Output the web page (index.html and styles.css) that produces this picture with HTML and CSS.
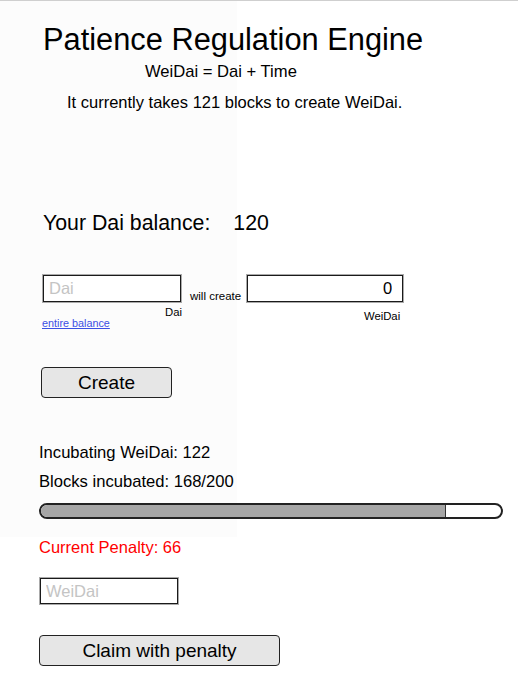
FILE: index.html
```html
<!DOCTYPE html>
<html>
<head>
<meta charset="utf-8">
<link rel="stylesheet" href="styles.css">
</head>
<body>
<div class="shade"></div>
<main class="page">
  <header class="head">
    <h1 class="title">Patience Regulation Engine</h1>
    <p class="formula">WeiDai = Dai + Time</p>
    <p class="blocks">It currently takes 121 blocks to create WeiDai.</p>
  </header>

  <section class="balance">
    <span>Your Dai balance:</span><span class="bal-val">120</span>
  </section>

  <section class="convert">
    <div class="field">
      <input class="box" type="text" placeholder="Dai">
      <span class="unit">Dai</span>
      <a class="entire" href="#">entire balance</a>
    </div>
    <span class="will">will create</span>
    <div class="field">
      <input class="box right" type="text" value="0">
      <span class="unit unit2">WeiDai</span>
    </div>
  </section>

  <button class="btn create">Create</button>

  <section class="incubation">
    <p class="line">Incubating WeiDai: 122</p>
    <p class="line">Blocks incubated: 168/200</p>
    <div class="bar"><div class="fill" style="width:88%"></div></div>
    <p class="penalty">Current Penalty: 66</p>
    <input class="box small" type="text" placeholder="WeiDai">
    <button class="btn claim">Claim with penalty</button>
  </section>
</main>
</body>
</html>
```

FILE: styles.css
```css
html, body {
  margin: 0;
  padding: 0;
  background: #fff;
}
body {
  font-family: "Liberation Sans", Arial, sans-serif;
  color: #000;
  border-top: 1px solid #cfcfcf;
  position: relative;
  height: 695px;
  overflow: hidden;
}
.shade {
  position: absolute;
  left: 0;
  top: 0;
  width: 237px;
  height: 536px;
  background: #fcfcfc;
}
.page {
  position: relative;
  display: flex;
  flex-direction: column;
  align-items: flex-start;
}
.head {
  margin-left: 43px;
  width: 380px;
  display: flex;
  flex-direction: column;
}
.title {
  font-size: 30.8px;
  font-weight: normal;
  margin: 20px 0 0 0;
  line-height: 37px;
  white-space: nowrap;
}
.formula {
  margin: 5px 0 0 102px;
  font-size: 16.6px;
  line-height: 18px;
}
.blocks {
  margin: 12px 0 0 24px;
  font-size: 16.5px;
  line-height: 18px;
  white-space: nowrap;
}
.balance {
  margin: 100px 0 0 43px;
  font-size: 21.3px;
  line-height: 24px;
  display: flex;
  gap: 23px;
}
.convert {
  margin: 39px 0 0 42px;
  display: flex;
  align-items: flex-start;
}
.field {
  display: flex;
  flex-direction: column;
  align-items: flex-end;
  position: relative;
}
.box {
  box-sizing: border-box;
  width: 140px;
  height: 29px;
  border: 2px solid #1a1a1a;
  outline: 1px solid #aaa;
  outline-offset: -1px;
  background: #fff;
  font-family: "Liberation Sans", Arial, sans-serif;
  font-size: 16.5px;
  padding: 0 5px;
  margin: 0;
  color: #000;
}
.box::placeholder {
  color: #c4c4c4;
}
.box.right {
  width: 158px;
  text-align: right;
  padding-right: 10px;
}
.unit {
  font-size: 11.3px;
  line-height: 13px;
  margin-top: 3px;
}
.unit2 {
  margin-top: 7px;
  margin-right: 4px;
}
.entire {
  align-self: flex-start;
  font-size: 10.8px;
  line-height: 13px;
  color: #3b4fe4;
  margin-top: -2px;
}
.will {
  font-size: 11.5px;
  line-height: 13px;
  margin: 16px 5px 0 8px;
}
.btn {
  box-sizing: border-box;
  background: #e6e6e6;
  border: 1px solid #222;
  border-radius: 4px;
  font-family: "Liberation Sans", Arial, sans-serif;
  font-size: 19px;
  color: #000;
  padding: 0;
  height: 31px;
}
.create {
  margin: 37px 0 0 41px;
  width: 131px;
}
.incubation {
  margin: 46px 0 0 39px;
  display: flex;
  flex-direction: column;
  align-items: flex-start;
}
.line {
  margin: 0 0 11px 0;
  font-size: 16.6px;
  line-height: 18px;
}
.bar {
  box-sizing: border-box;
  width: 464px;
  height: 16px;
  border: 2px solid #222;
  border-radius: 8px;
  background: #fff;
  overflow: hidden;
  margin-top: 1px;
}
.fill {
  height: 100%;
  background: #a6a6a6;
  border-right: 1px solid #333;
  box-sizing: border-box;
}
.penalty {
  color: #ff0000;
  font-size: 16.5px;
  line-height: 18px;
  margin: 19px 0 0 0;
}
.box.small {
  width: 140px;
  height: 28px;
  margin-top: 21px;
}
.claim {
  margin-top: 30px;
  width: 241px;
}
```
